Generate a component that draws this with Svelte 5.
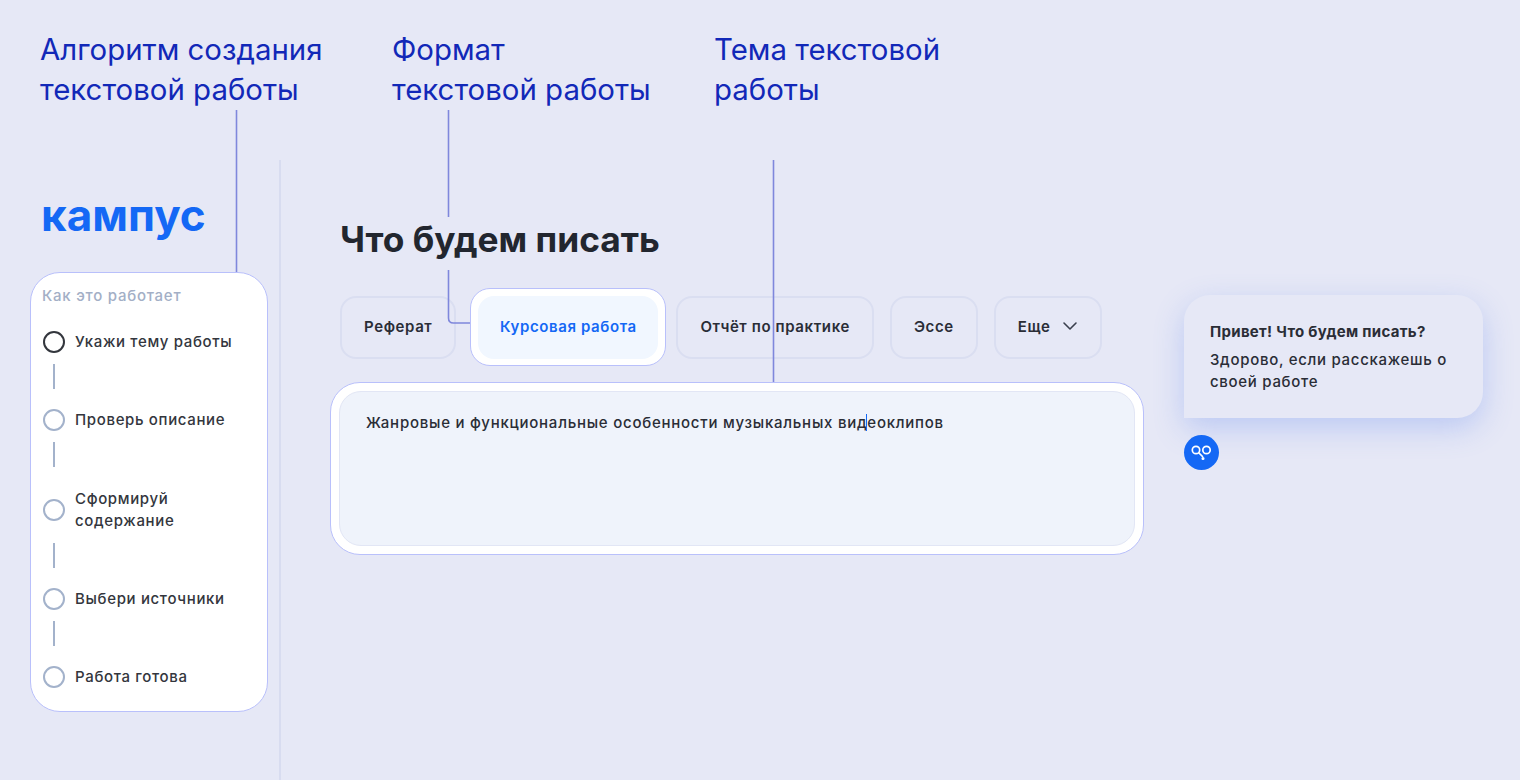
<script lang="ts">
	const notes = [
		['Алгоритм создания', 'текстовой работы'],
		['Формат', 'текстовой работы'],
		['Тема текстовой', 'работы']
	];
	const steps = [
		{ label: ['Укажи тему работы'], active: true },
		{ label: ['Проверь описание'] },
		{ label: ['Сформируй', 'содержание'] },
		{ label: ['Выбери источники'] },
		{ label: ['Работа готова'] }
	];
</script>

<div class="page">
	<header class="notes">
		{#each notes as note}
			<p class="note">{note[0]}<br />{note[1]}</p>
		{/each}
	</header>

	<div class="app">
		<aside class="sidebar">
			<div class="logo">кампус</div>
			<section class="how">
				<h2>Как это работает</h2>
				<ol>
					{#each steps as step, i}
						{#if i > 0}<li class="link" aria-hidden="true"></li>{/if}
						<li class="step" class:active={step.active}>
							<span class="dot"></span>
							<span>{step.label[0]}{#if step.label[1]}<br />{step.label[1]}{/if}</span>
						</li>
					{/each}
				</ol>
			</section>
		</aside>

		<main class="main">
			<div class="form">
				<h1>Что будем писать</h1>
				<div class="chips">
					<button class="chip">Реферат</button>
					<div class="chip-ring"><button class="chip selected">Курсовая работа</button></div>
					<button class="chip">Отчёт по практике</button>
					<button class="chip">Эссе</button>
					<button class="chip more">
						Еще
						<svg width="16" height="10" viewBox="0 0 16 10" fill="none">
							<path d="M2 2l6 6 6-6" stroke="#3a3f4d" stroke-width="1.6" stroke-linecap="round" stroke-linejoin="round" />
						</svg>
					</button>
				</div>
				<div class="topic">
					<div class="field">Жанровые и функциональные особенности музыкальных вид<span class="caret"></span>еоклипов</div>
				</div>
			</div>

			<div class="chat">
				<div class="bubble">
					<strong>Привет! Что будем писать?</strong>
					<p>Здорово, если расскажешь о своей работе</p>
				</div>
				<div class="avatar">
					<svg width="21" height="17" viewBox="0 0 21 17" fill="none" stroke="#fff" stroke-width="1.7">
						<circle cx="5" cy="6" r="3.7" />
						<circle cx="15.5" cy="6" r="3.7" />
						<path d="M8 9l3.5 3.5" stroke-linecap="round" />
						<circle cx="12" cy="14.5" r="0.7" fill="#fff" />
					</svg>
				</div>
			</div>
		</main>
	</div>

	<!-- callout lines sit above the interface -->
	<svg class="callouts" width="1520" height="780" fill="none" stroke="#7f87dc" stroke-width="1.6">
		<path d="M236.5 110V272" />
		<path d="M448.5 110V217" />
		<path d="M448.5 270V318q0 5 5 5H470" />
		<path d="M773.5 160V382" />
	</svg>
</div>

<style>
	:global(body) {
		background: #e6e8f6;
	}
	.page {
		position: relative;
		height: 780px;
		overflow: hidden;
		background: #e6e8f6;
		font-family: Inter, 'Noto Sans', sans-serif;
		color: #22262f;
	}
	.notes {
		display: grid;
		grid-template-columns: 352px 322px auto;
		height: 130px;
		padding: 30px 0 0 40px;
	}
	.note {
		margin: 0;
		font-family: Inter, sans-serif;
		font-size: 29.4px;
		line-height: 40px;
		color: #1228b8;
	}
	.app {
		display: flex;
		height: 620px;
	}
	.sidebar {
		box-sizing: border-box;
		width: 281px;
		flex: none;
		padding: 32px 0 0 30px;
		border-right: 2px solid #d8dcf0;
	}
	.logo {
		height: 80px;
		margin-left: 11px;
		font-size: 44px;
		line-height: 46px;
		font-weight: 700;
		color: #1468f5;
	}
	.how {
		box-sizing: border-box;
		width: 238px;
		height: 440px;
		padding: 14px 12px 0;
		background: #fff;
		border: 1px solid #b9c0fb;
		border-radius: 30px;
	}
	h2 {
		margin: 0 0 26px -1px;
		font-size: 15px;
		line-height: 18px;
		font-weight: 500;
		letter-spacing: 0.75px;
		color: #a3afc6;
	}
	ol {
		margin: 0;
		padding: 0;
		list-style: none;
	}
	.step {
		display: flex;
		align-items: center;
		gap: 10px;
		font-size: 15px;
		line-height: 22px;
		font-weight: 500;
		letter-spacing: 0.65px;
		color: #33363d;
	}
	.dot {
		box-sizing: border-box;
		flex: none;
		width: 22px;
		height: 22px;
		border: 2px solid #a3b2cb;
		border-radius: 50%;
	}
	.step.active .dot {
		border-color: #33363d;
	}
	.link {
		width: 2px;
		height: 25px;
		margin: 11px 0 20.25px 10px;
		background: #a3b2cb;
	}
	.main {
		display: flex;
		gap: 40px;
		padding-left: 49px;
	}
	.form {
		width: 814px;
		flex: none;
		padding-top: 60px;
	}
	h1 {
		margin: 0 0 28px 10px;
		font-size: 35.3px;
		line-height: 40px;
		font-weight: 700;
		color: #22262f;
	}
	.chips {
		display: flex;
		align-items: center;
		gap: 16px;
		height: 78px;
		margin: 0 0 16px 10px;
	}
	.chip {
		box-sizing: border-box;
		height: 63px;
		padding: 0 22px 2px;
		background: transparent;
		border: 2px solid #dadef1;
		border-radius: 16px;
		font: 600 15px Inter, sans-serif;
		letter-spacing: 0.6px;
		color: #2a2d36;
	}
	.chip-ring {
		box-sizing: border-box;
		width: 196px;
		height: 78px;
		margin: 0 -6px 0 -2px;
		padding: 7px;
		background: #fff;
		border: 1px solid #b9c0fb;
		border-radius: 20px;
	}
	.chip.selected {
		display: block;
		width: 100%;
		padding: 0 0 2px;
		background: #f1f7ff;
		border: none;
		color: #1468f5;
	}
	.more {
		display: flex;
		align-items: center;
		gap: 12px;
	}
	.topic {
		box-sizing: border-box;
		height: 173px;
		padding: 8px;
		background: #fff;
		border: 1px solid #b9c0fb;
		border-radius: 30px;
	}
	.field {
		box-sizing: border-box;
		height: 100%;
		padding: 20px 26px;
		background: #eff3fb;
		border: 1px solid #e2e6f5;
		border-radius: 22px;
		font-size: 15px;
		line-height: 22px;
		font-weight: 500;
		letter-spacing: 0.75px;
		color: #2a2d36;
	}
	.caret {
		display: inline-block;
		width: 1px;
		height: 17px;
		margin: 0 0 0 -1px;
		vertical-align: -3px;
		background: #1468f5;
	}
	.chat {
		width: 299px;
		flex: none;
		padding-top: 135px;
	}
	.bubble {
		box-sizing: border-box;
		height: 123px;
		padding: 26px 30px 0 26px;
		background: #e6e8f6;
		border-radius: 26px 26px 26px 0;
		box-shadow: 0 10px 30px rgba(90, 130, 240, 0.3);
		font-size: 15px;
		line-height: 22px;
		color: #2a2d36;
	}
	.bubble strong {
		display: block;
		font-weight: 700;
		letter-spacing: 0.3px;
	}
	.bubble p {
		margin: 6px 0 0;
		font-weight: 500;
		letter-spacing: 0.7px;
	}
	.avatar {
		display: flex;
		align-items: center;
		justify-content: center;
		width: 35px;
		height: 35px;
		margin-top: 17px;
		background: #1468f5;
		border-radius: 50%;
	}
	.callouts {
		position: absolute;
		inset: 0;
		pointer-events: none;
	}
</style>
